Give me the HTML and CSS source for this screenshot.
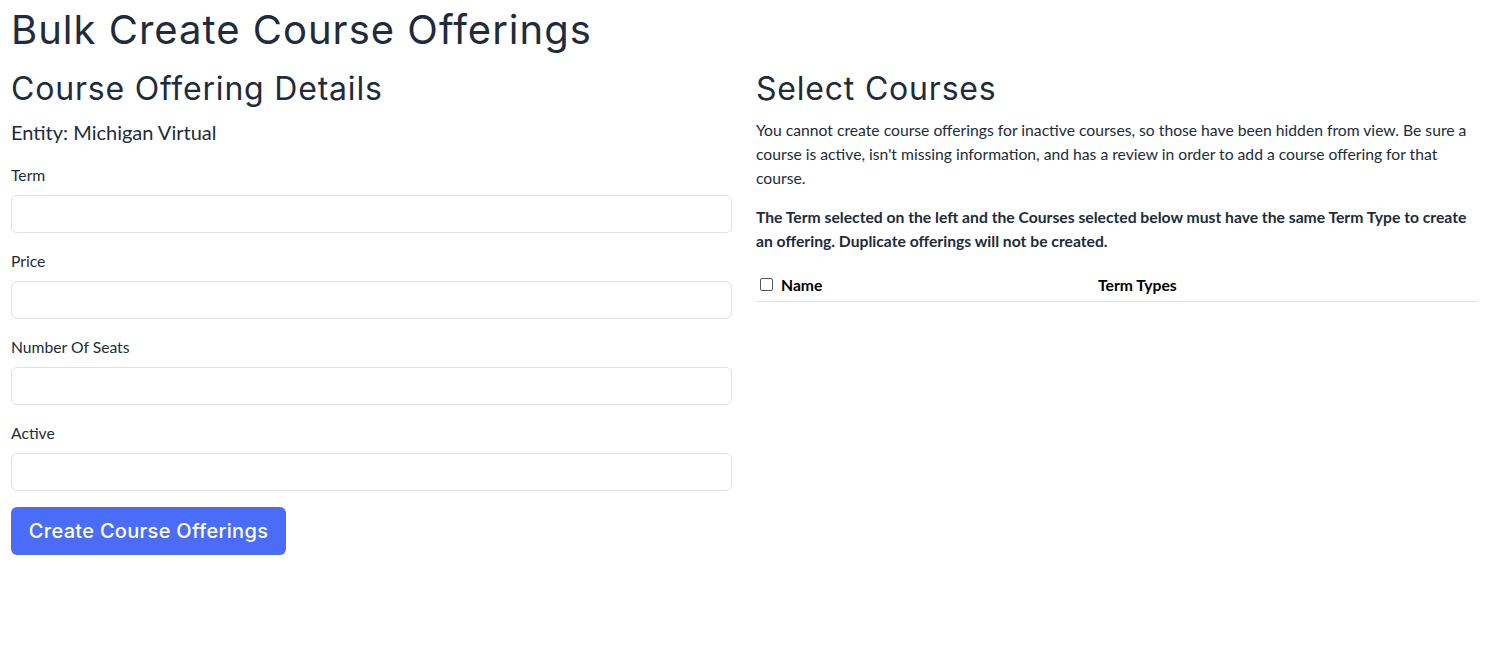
FILE: index.html
```html
<!DOCTYPE html>
<html lang="en">
<head>
<meta charset="utf-8">
<title>Bulk Create Course Offerings</title>
<link rel="stylesheet" href="styles.css">
</head>
<body>
<main class="page">
  <h1 class="title">Bulk Create Course Offerings</h1>
  <div class="columns">
    <section class="col">
      <h2 class="subtitle">Course Offering Details</h2>
      <p class="entity">Entity: Michigan Virtual</p>
      <form class="form">
        <div class="field">
          <label class="label">Term</label>
          <div class="input"></div>
        </div>
        <div class="field">
          <label class="label">Price</label>
          <div class="input"></div>
        </div>
        <div class="field">
          <label class="label">Number Of Seats</label>
          <div class="input"></div>
        </div>
        <div class="field field-last">
          <label class="label">Active</label>
          <div class="input"></div>
        </div>
        <button type="button" class="btn">Create Course Offerings</button>
      </form>
    </section>
    <section class="col">
      <h2 class="subtitle">Select Courses</h2>
      <p class="text">You cannot create course offerings for inactive courses, so those have been hidden from view. Be sure a course is active, isn't missing information, and has a review in order to add a course offering for that course.</p>
      <p class="text bold">The Term selected on the left and the Courses selected below must have the same Term Type to create an offering. Duplicate offerings will not be created.</p>
      <div class="table-head">
        <div class="th th-name"><span class="check"></span>Name</div>
        <div class="th">Term Types</div>
      </div>
    </section>
  </div>
</main>
</body>
</html>
```
FILE: styles.css
```css
* { box-sizing: border-box; }
body {
  margin: 0;
  background: #fff;
  color: #212b3b;
  font-family: Lato, "Liberation Sans", sans-serif;
  font-size: 15.7px;
}
.page {
  padding: 0 9px 0 11px;
}
.title {
  font-family: Inter, "Open Sans", sans-serif;
  font-weight: 400;
  font-size: 40px;
  line-height: 60px;
  margin: 0;
  letter-spacing: 1px;
}
.columns {
  display: grid;
  grid-template-columns: 1fr 1fr;
  column-gap: 24px;
}
.subtitle {
  font-family: Inter, "Open Sans", sans-serif;
  font-weight: 400;
  font-size: 32px;
  line-height: 42px;
  margin: 8px 0 0;
  letter-spacing: 0.8px;
}
.entity {
  font-size: 20px;
  line-height: 28px;
  margin: 8px 0 0;
}
.form {
  margin-top: 18px;
}
.field {
  display: flex;
  flex-direction: column;
}
.label {
  display: block;
  height: 22px;
  line-height: 22px;
  margin-bottom: 9px;
}
.input {
  height: 38px;
  border: 1px solid #dee2e6;
  border-radius: 6px;
  margin-bottom: 17px;
}
.field-last .input {
  margin-bottom: 16px;
}
.btn {
  display: block;
  height: 48px;
  width: 275px;
  padding: 0;
  border: 0;
  border-radius: 6px;
  background: #4a6cf7;
  color: #fff;
  font-family: Inter, "Open Sans", sans-serif;
  font-size: 20px;
  font-weight: 500;
  letter-spacing: 0.3px;
}
.text {
  margin: 8px 0 0;
  line-height: 24px;
}
.text.bold {
  font-weight: 700;
  margin-top: 15px;
}
.table-head {
  display: grid;
  grid-template-columns: 342px 1fr;
  margin-top: 17px;
  border-bottom: 1px solid #dee2e6;
  color: #000;
  font-weight: 700;
}
.th {
  padding: 4px 0 5px;
  height: 31px;
  line-height: 22px;
  display: flex;
  align-items: center;
}
.th-name { padding-left: 4px; }
.check {
  width: 13px;
  height: 13px;
  border: 1px solid #555;
  border-radius: 2px;
  margin-right: 8px;
  margin-top: -2px;
}
```
